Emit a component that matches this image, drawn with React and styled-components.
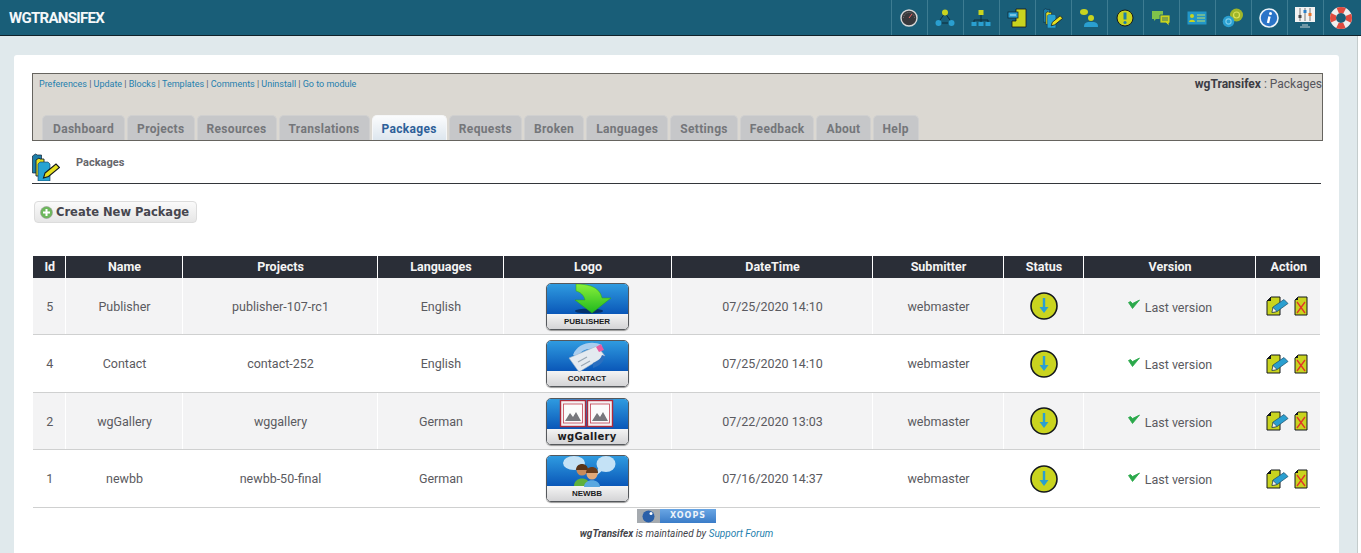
import React from 'react';
import styled, { createGlobalStyle } from 'styled-components';

const GlobalStyle = createGlobalStyle`
  html, body {
    margin: 0;
    padding: 0;
    height: 553px;
    overflow: hidden;
    background: #fff;
    font-family: Roboto, "Liberation Sans", sans-serif;
  }
`;

const TopBar = styled.header`
  display: flex;
  justify-content: space-between;
  align-items: stretch;
  height: 35px;
  background: #195e78;
  border-bottom: 1px solid #10222a;
`;

const Brand = styled.div`
  display: flex;
  align-items: center;
  padding-left: 9px;
  color: #f4f8fa;
  font-size: 15px;
  font-weight: 700;
  letter-spacing: -0.7px;
`;

const IconBar = styled.nav`
  display: flex;
  margin-right: 2px;
`;

const IconCell = styled.div`
  display: flex;
  align-items: center;
  justify-content: center;
  width: 35px;
  border-left: 1px solid #3d7c92;
  svg { position: relative; left: -1px; }
`;

const Page = styled.main`
  height: 517px;
  margin-right: 3px;
  padding: 19px 18px 0 14px;
  box-sizing: border-box;
  background: #e0e9ec;
  border-right: 1px solid #c4cccc;
`;

const Card = styled.section`
  height: 498px;
  padding: 18px 18px 0 18px;
  box-sizing: border-box;
  background: #fff;
  border-radius: 3px 3px 0 0;
`;

const AdminBox = styled.div`
  display: flex;
  flex-direction: column;
  justify-content: space-between;
  height: 68px;
  width: 1291px;
  box-sizing: border-box;
  background: #dbd8d2;
  border: 1px solid #66645f;
`;

const AdminTop = styled.div`
  display: flex;
  justify-content: space-between;
  padding: 4px 0 0 6px;
`;

const AdminLinks = styled.div`
  font-size: 9px;
  letter-spacing: -0.01px;
  line-height: 12px;
  color: #55606a;
`;

const Link = styled.a`
  color: #1f7fae;
  text-decoration: none;
`;

const AdminTitle = styled.div`
  margin-top: -1px;
  font-size: 12px;
  line-height: 14px;
  color: #55555c;
  strong { color: #3c3c44; }
`;

const Tabs = styled.div`
  display: flex;
  gap: 2px;
  padding-left: 9px;
`;

const Tab = styled.div`
  height: 25px;
  padding: 0 ${p => (p.$first ? 10 : 9)}px;
  box-sizing: border-box;
  font-size: 12px;
  font-weight: 700;
  letter-spacing: 0.33px;
  line-height: 26px;
  border-radius: 5px 5px 0 0;
  color: ${p => (p.$active ? '#2d6099' : '#74767a')};
  background: ${p => (p.$active ? 'linear-gradient(#fbfcfd, #dde6ee)' : '#c6c7c9')};
  border: 1px solid ${p => (p.$active ? '#f6f7f8' : '#d0d0d0')};
  border-bottom: 0;
`;

const PageTitle = styled.div`
  display: flex;
  align-items: flex-start;
  height: 43px;
  width: 1289px;
  box-sizing: border-box;
  border-bottom: 1px solid #33363a;
  padding-top: 12px;
`;

const PageTitleText = styled.span`
  margin: 3px 0 0 16px;
  font-size: 11px;
  font-weight: 700;
  line-height: 14px;
  color: #66666c;
`;

const Toolbar = styled.div`
  display: flex;
  height: 72px;
  padding: 17px 0 0 2px;
  box-sizing: border-box;
`;

const AddButton = styled.div`
  display: flex;
  align-items: center;
  gap: 3px;
  height: 22px;
  padding: 0 7px 0 5px;
  box-sizing: border-box;
  border: 1px solid #dcdcdc;
  border-radius: 4px;
  background: linear-gradient(#fafafa, #e6e6e6);
  font-family: "DejaVu Sans", sans-serif;
  font-size: 11.5px;
  font-weight: 700;
  color: #46464e;
`;

const Table = styled.table`
  width: 1287px;
  margin-left: 1px;
  table-layout: fixed;
  border-collapse: collapse;
  font-size: 12.5px;
  color: #5a5a60;
  text-align: center;
`;

const Head = styled.th`
  height: 22px;
  padding: 0 0 2px 2px;
  box-sizing: border-box;
  background: #2a2e37;
  color: #f4f4f4;
  font-size: 12.5px;
  font-weight: 700;
  border-left: 1px solid #fff;
  &:first-child { border-left: 0; }
`;

const Cell = styled.td`
  height: ${p => (p.$tall ? 57 : 56)}px;
  padding: 0 0 0 2px;
  background: ${p => (p.$odd ? '#f3f3f4' : '#fff')};
  border-left: 1px solid #fff;
  border-bottom: 1px solid #cfd0d0;
  &:first-child { border-left: 0; }
`;

const CellInner = styled.div`
  display: flex;
  align-items: center;
  justify-content: center;
  gap: ${p => p.$gap || 0}px;
  padding-right: ${p => p.$shift || 0}px;
`;

const VersionText = styled.span`
  position: relative;
  top: 1px;
`;

const CheckWrap = styled.span`
  display: flex;
  position: relative;
  top: -2px;
`;

const Badge = styled.div`
  display: flex;
  flex-direction: column;
  width: 83px;
  height: 47px;
  margin: 0 auto;
  border: 1px solid #55585c;
  border-radius: 5px;
  box-sizing: border-box;
  overflow: hidden;
  box-shadow: 0 1px 1px #999;
  transform: translateX(-1px);
`;

const BadgeArt = styled.div`
  display: flex;
  justify-content: center;
  height: 30px;
  background: linear-gradient(#2f9be0, #0a57b8);
  svg { overflow: visible; position: relative; z-index: 1; }
`;

const BadgeLabel = styled.div`
  flex: 1;
  display: flex;
  align-items: center;
  justify-content: center;
  background: linear-gradient(#f4f4f4, #d4d4d6);
  color: #1c1c1e;
  font-family: ${p => (p.$big ? '"DejaVu Sans"' : '"Liberation Sans"')}, sans-serif;
  font-weight: 700;
  font-size: ${p => (p.$big ? 10 : 8)}px;
  letter-spacing: ${p => (p.$big ? 0.3 : 0)}px;
`;

const Footer = styled.div`
  display: flex;
  flex-direction: column;
  align-items: center;
  gap: 4px;
  width: 1287px;
  margin-left: 1px;
  padding-top: 1px;
  font-size: 10px;
  font-style: italic;
  line-height: 14px;
  color: #44444a;
`;

const XoopsBadge = styled.div`
  display: flex;
  width: 79px;
  height: 14px;
  font-family: "DejaVu Sans", sans-serif;
  font-size: 8px;
  font-style: normal;
  font-weight: 700;
  letter-spacing: 1px;
  color: #eef4fa;
`;

const XoopsGlobe = styled.div`
  display: flex;
  align-items: center;
  justify-content: center;
  width: 23px;
  background: #a5aaaf;
`;

const XoopsName = styled.div`
  flex: 1;
  text-align: center;
  line-height: 14px;
  background: linear-gradient(#6aa6e4, #3a7cc8);
`;

const Y = '#c9d41f';
const B = '#2a9fd0';
const K = '#14181c';

const FolderPencil = ({ size = 28 }) => (
  <svg width={size} height={size} viewBox="0 0 28 28">
    <path d="M0.5 3l3-2 2 1h4v18h-9z" fill="#1d7ea8" stroke="#123" strokeWidth=".7" />
    <path d="M4 7l3-2 1 1h4v17H4z" fill="#e6e020" stroke="#123" strokeWidth=".9" />
    <path d="M6 11l2-2h8l2 2v17H6z" fill="#27a3d3" stroke="#135" strokeWidth=".6" />
    <path d="M13 20l11-9 3.5 3.5-11 9-5 1.5z" fill="#e6e020" stroke={K} strokeWidth="1.1" />
  </svg>
);

const topIcons = [
  <svg width="18" height="18" viewBox="0 0 18 18" key="gauge">
    <circle cx="9" cy="9" r="8" fill="#38383c" stroke="#d8d8d8" strokeWidth="1.4" />
    <path d="M9 9l3-4" stroke="#e66" strokeWidth="1" />
    <path d="M3.5 9a5.5 5.5 0 0 1 11 0" fill="none" stroke="#999" strokeWidth=".7" strokeDasharray="1 1" />
  </svg>,
  <svg width="20" height="20" viewBox="0 0 20 20" key="network">
    <path d="M10 5L3 15h14z" fill="none" stroke="#0d2c3a" strokeWidth="1" />
    <circle cx="10" cy="4.5" r="3" fill={Y} />
    <circle cx="3.5" cy="15" r="3" fill={B} />
    <circle cx="16.5" cy="15" r="3" fill={B} />
  </svg>,
  <svg width="20" height="18" viewBox="0 0 20 18" key="tree">
    <path d="M10 6v4M3 14v-3h14v3M10 10v4" fill="none" stroke="#0d2c3a" strokeWidth="1" />
    <rect x="7.5" y="1" width="5" height="5" fill={Y} />
    <rect x="0.5" y="13" width="5" height="4" fill={B} />
    <rect x="7.5" y="13" width="5" height="4" fill={B} />
    <rect x="14.5" y="13" width="5" height="4" fill={B} />
  </svg>,
  <svg width="20" height="20" viewBox="0 0 20 20" key="tablet">
    <path d="M9 1h10v18H5v-6h4z" fill={Y} stroke={K} strokeWidth=".8" />
    <rect x="1" y="4" width="10" height="6" fill={B} stroke="#0d2c3a" strokeWidth=".8" />
    <path d="M3 7h6" stroke="#bfe8f5" strokeWidth="1" />
  </svg>,
  <FolderPencil size={20} key="packages" />,
  <svg width="20" height="20" viewBox="0 0 20 20" key="people">
    <ellipse cx="5" cy="4" rx="4" ry="3" fill={Y} />
    <circle cx="12" cy="10" r="3" fill={Y} />
    <path d="M5 19c0-5 3-5 7-5s7 0 7 5z" fill={B} />
  </svg>,
  <svg width="18" height="18" viewBox="0 0 18 18" key="alert">
    <circle cx="9" cy="9" r="8" fill={Y} stroke={K} strokeWidth="1" />
    <path d="M9 3.5v7" stroke="#1d7ea8" strokeWidth="3" />
    <circle cx="9" cy="13.5" r="1.6" fill="#1d7ea8" />
  </svg>,
  <svg width="20" height="16" viewBox="0 0 20 16" key="chat">
    <path d="M1 1h11v8H5l-2 2V9H1z" fill="#7fc24a" />
    <path d="M9 5h10v8h-1v3l-3-3H9z" fill={Y} stroke="#195e78" strokeWidth=".8" />
    <path d="M11 8h6M11 10h6" stroke="#195e78" strokeWidth=".8" />
  </svg>,
  <svg width="20" height="14" viewBox="0 0 20 14" key="card">
    <rect x="0.5" y="0.5" width="19" height="13" fill="#2296c8" />
    <circle cx="5" cy="5" r="2" fill={Y} />
    <path d="M2 11c0-3 6-3 6 0z" fill={Y} />
    <path d="M10 4h8M10 7h8M10 10h8" stroke="#b9dc6a" strokeWidth="1.2" />
  </svg>,
  <svg width="22" height="20" viewBox="0 0 22 20" key="spheres">
    <circle cx="14.5" cy="7" r="6.5" fill="#9fb62a" />
    <circle cx="14.5" cy="7" r="3" fill="none" stroke="#dbe25a" strokeWidth="1.2" />
    <circle cx="6.5" cy="13.5" r="5.8" fill="#2a9fd0" />
    <circle cx="6.5" cy="13.5" r="2.6" fill="none" stroke="#7dcdea" strokeWidth="1.2" />
  </svg>,
  <svg width="20" height="20" viewBox="0 0 20 20" key="info">
    <circle cx="10" cy="10" r="9" fill="#2a74c8" stroke="#eef4fa" strokeWidth="1.6" />
    <circle cx="11.5" cy="5.5" r="1.5" fill="#fff" />
    <path d="M10.5 8.5L9 15" stroke="#fff" strokeWidth="2.4" />
  </svg>,
  <svg width="22" height="21" viewBox="0 0 22 21" key="mixer">
    <rect x="1" y="0" width="20" height="15" fill="#f2f2f2" />
    <path d="M6 1v13M11 1v13M16 1v13" stroke="#777" strokeWidth="1" />
    <rect x="4.5" y="8" width="3" height="3" fill="#4a4a4a" />
    <rect x="9.5" y="3" width="3" height="3" fill="#2a7fc8" />
    <rect x="14.5" y="6" width="3" height="3" fill="#e8742a" />
    <path d="M8 18h6M6 20h10" stroke="#c4cfd4" strokeWidth="1.2" />
  </svg>,
  <svg width="22" height="22" viewBox="0 0 22 22" key="buoy">
    <circle cx="11" cy="11" r="8" fill="none" stroke="#f0eeee" strokeWidth="6" />
    <circle cx="11" cy="11" r="8" fill="none" stroke="#df4b3f" strokeWidth="6" strokeDasharray="7 5.57" strokeDashoffset="3.5" />
  </svg>,
];

const StatusIcon = () => (
  <svg width="28" height="28" viewBox="0 0 28 28">
    <circle cx="14" cy="14" r="13" fill={Y} stroke={K} strokeWidth="1.6" />
    <path d="M14 6v13" stroke={B} strokeWidth="2.4" />
    <path d="M9.5 15L14 21l4.5-6z" fill={B} />
  </svg>
);

const CheckIcon = () => (
  <svg width="12" height="10" viewBox="0 0 12 10">
    <path d="M0.5 3.5L4.5 9.5L11.5 1L4.5 4.5L2.5 2.5z" fill="#2aa84a" stroke="#2aa84a" strokeWidth=".8" />
  </svg>
);

const EditIcon = () => (
  <svg width="23" height="20" viewBox="0 0 23 20">
    <path d="M5 1h9v18H1V5z" fill={Y} stroke={K} strokeWidth="1" />
    <path d="M1 5h4V1z" fill={K} />
    <path d="M7 11L18 3.5l4 4-11 8-5 1z" fill="#2a9fd0" stroke="#1a4a66" strokeWidth=".7" />
    <path d="M6 16.5l1-5 4 4z" fill="#f4f4f4" stroke={K} strokeWidth=".5" />
  </svg>
);

const DeleteIcon = () => (
  <svg width="14" height="20" viewBox="0 0 14 20">
    <path d="M4 1h9v18H1V4z" fill={Y} stroke={K} strokeWidth="1" />
    <path d="M1 4h3V1z" fill={K} />
    <path d="M3 6l8 11M11 6L3 17" stroke="#e2342a" strokeWidth="1.3" />
  </svg>
);

const AddIcon = () => (
  <svg width="13" height="13" viewBox="0 0 13 13">
    <circle cx="6.5" cy="6.5" r="6" fill="#6db85c" stroke="#9a9a9a" strokeWidth=".6" />
    <path d="M6.5 3v7M3 6.5h7" stroke="#fff" strokeWidth="2" />
  </svg>
);

const PublisherArt = () => (
  <svg width="50" height="30" viewBox="0 0 50 30">
    <defs>
      <linearGradient id="pubGreen" x1="0" y1="0" x2="0" y2="1">
        <stop offset="0" stopColor="#8af03a" />
        <stop offset="1" stopColor="#1fb81e" />
      </linearGradient>
    </defs>
    <ellipse cx="27" cy="27" rx="14" ry="2.5" fill="#06326e" />
    <path d="M14 0C24 0 38 2 40 14H49L30 29L13 16H23C22 11 18 8 14 7Z" fill="url(#pubGreen)" stroke="#2ea314" strokeWidth=".5" />
  </svg>
);

const ContactArt = () => (
  <svg width="44" height="30" viewBox="0 0 44 30">
    <path d="M8 14C12 3 26-1 37 4l-3 5C25 6 16 8 13 16z" fill="#a9cdee" />
    <path d="M4 17l28-12 8 10-26 16z" fill="#e4eaf0" stroke="#9fb4c8" strokeWidth=".6" />
    <path d="M31 6l5-3 3 6-5 2z" fill="#e85aa0" />
    <path d="M13 21l9-5M16 25l9-5" stroke="#9aa8b4" strokeWidth="1.2" />
    <path d="M28 22c6-2 8-5 9-8l3 1c-1 5-5 10-12 12z" fill="#2a6fc0" />
  </svg>
);

const GalleryArt = () => (
  <svg width="56" height="30" viewBox="0 0 56 30">
    {[1, 28].map(x => (
      <g key={x} transform={`translate(${x} 1)`}>
        <rect x="0.5" y="0.5" width="25" height="26" fill="#f4f2f4" stroke="#b02a3a" strokeWidth="1.4" />
        <rect x="3.5" y="4" width="19" height="19" fill="#fbfbfb" stroke="#c24050" strokeWidth=".8" />
        <path d="M5 21l5-8 3 4 3-5 5 9z" fill="#77777c" />
      </g>
    ))}
  </svg>
);

const NewbbArt = () => (
  <svg width="56" height="30" viewBox="0 0 56 30">
    <ellipse cx="15" cy="7" rx="11" ry="7" fill="#c4e2f6" />
    <path d="M16 12l6 6-1-6z" fill="#c4e2f6" />
    <ellipse cx="47" cy="8" rx="9.5" ry="8" fill="#c4e2f6" />
    <path d="M44 14l-6 5 1-7z" fill="#c4e2f6" />
    <circle cx="23" cy="14" r="5.5" fill="#c88a5a" />
    <path d="M17 14c0-8 12-8 12 0z" fill="#5a3418" />
    <path d="M15 30c0-10 16-10 16 0z" fill="#5fb03c" />
    <circle cx="33" cy="18" r="5.5" fill="#e2a878" />
    <path d="M27 17c0-8 12-8 12 0z" fill="#6a3c1c" />
    <path d="M25 31c0-9 16-9 16 0z" fill="#5aa8e0" />
  </svg>
);

const tabs = ['Dashboard', 'Projects', 'Resources', 'Translations', 'Packages', 'Requests', 'Broken', 'Languages', 'Settings', 'Feedback', 'About', 'Help'];

const links = ['Preferences', 'Update', 'Blocks', 'Templates', 'Comments', 'Uninstall', 'Go to module'];

const columns = [
  ['Id', 32], ['Name', 117], ['Projects', 195], ['Languages', 126], ['Logo', 168],
  ['DateTime', 201], ['Submitter', 131], ['Status', 80], ['Version', 172], ['Action', 65],
];

const rows = [
  { id: 5, name: 'Publisher', project: 'publisher-107-rc1', lang: 'English', art: <PublisherArt />, label: 'PUBLISHER', date: '07/25/2020 14:10' },
  { id: 4, name: 'Contact', project: 'contact-252', lang: 'English', art: <ContactArt />, label: 'CONTACT', date: '07/25/2020 14:10' },
  { id: 2, name: 'wgGallery', project: 'wggallery', lang: 'German', art: <GalleryArt />, label: 'wgGallery', big: true, date: '07/22/2020 13:03' },
  { id: 1, name: 'newbb', project: 'newbb-50-final', lang: 'German', art: <NewbbArt />, label: 'NEWBB', date: '07/16/2020 14:37' },
];

const App = () => (
  <>
    <GlobalStyle />
    <TopBar>
      <Brand>WGTRANSIFEX</Brand>
      <IconBar>
        {topIcons.map(icon => <IconCell key={icon.key}>{icon}</IconCell>)}
      </IconBar>
    </TopBar>
    <Page>
      <Card>
        <AdminBox>
          <AdminTop>
            <AdminLinks>
              {links.map((l, i) => (
                <React.Fragment key={l}>
                  {i > 0 && ' | '}
                  <Link href="#">{l}</Link>
                </React.Fragment>
              ))}
            </AdminLinks>
            <AdminTitle><strong>wgTransifex</strong> : Packages</AdminTitle>
          </AdminTop>
          <Tabs>
            {tabs.map((t, i) => <Tab key={t} $first={i === 0} $active={t === 'Packages'}>{t}</Tab>)}
          </Tabs>
        </AdminBox>
        <PageTitle>
          <FolderPencil />
          <PageTitleText>Packages</PageTitleText>
        </PageTitle>
        <Toolbar>
          <AddButton><AddIcon />Create New Package</AddButton>
        </Toolbar>
        <Table>
          <colgroup>
            {columns.map(([c, w]) => <col key={c} width={w} />)}
          </colgroup>
          <thead>
            <tr>{columns.map(([c]) => <Head key={c}>{c}</Head>)}</tr>
          </thead>
          <tbody>
            {rows.map((r, i) => {
              const odd = i % 2 === 0;
              const tall = i % 2 === 1;
              return (
                <tr key={r.id}>
                  <Cell $odd={odd} $tall={tall}>{r.id}</Cell>
                  <Cell $odd={odd} $tall={tall}>{r.name}</Cell>
                  <Cell $odd={odd} $tall={tall}>{r.project}</Cell>
                  <Cell $odd={odd} $tall={tall}>{r.lang}</Cell>
                  <Cell $odd={odd} $tall={tall}>
                    <Badge>
                      <BadgeArt>{r.art}</BadgeArt>
                      <BadgeLabel $big={r.big}>{r.label}</BadgeLabel>
                    </Badge>
                  </Cell>
                  <Cell $odd={odd} $tall={tall}>{r.date}</Cell>
                  <Cell $odd={odd} $tall={tall}>webmaster</Cell>
                  <Cell $odd={odd} $tall={tall}><CellInner><StatusIcon /></CellInner></Cell>
                  <Cell $odd={odd} $tall={tall}>
                    <CellInner $gap={5}><CheckWrap><CheckIcon /></CheckWrap><VersionText>Last version</VersionText></CellInner>
                  </Cell>
                  <Cell $odd={odd} $tall={tall}>
                    <CellInner $gap={5} $shift={3}><EditIcon /><DeleteIcon /></CellInner>
                  </Cell>
                </tr>
              );
            })}
          </tbody>
        </Table>
        <Footer>
          <XoopsBadge>
            <XoopsGlobe>
              <svg width="13" height="13" viewBox="0 0 13 13">
                <circle cx="6.5" cy="6.5" r="6" fill="#2a5fa8" />
                <circle cx="9" cy="3.5" r="1.5" fill="#fff" />
              </svg>
            </XoopsGlobe>
            <XoopsName>XOOPS</XoopsName>
          </XoopsBadge>
          <div><strong>wgTransifex</strong> is maintained by <Link href="#">Support Forum</Link></div>
        </Footer>
      </Card>
    </Page>
  </>
);

export default App;
